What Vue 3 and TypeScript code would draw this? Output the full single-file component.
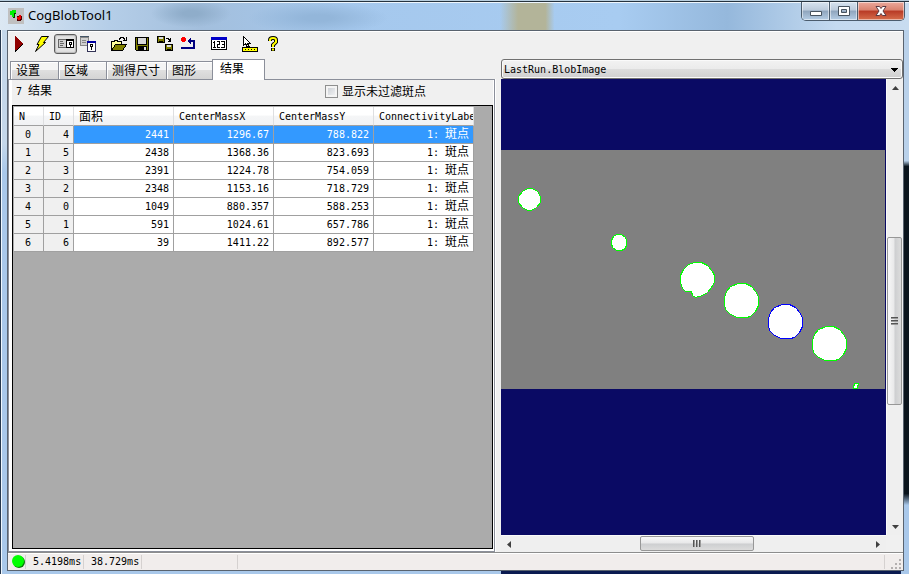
<script setup lang="ts">
import { ref } from 'vue'

interface BlobRow {
  n: number
  id: number
  area: number
  x: string
  y: string
}

const rows: BlobRow[] = [
  { n: 0, id: 4, area: 2441, x: '1296.67', y: '788.822' },
  { n: 1, id: 5, area: 2438, x: '1368.36', y: '823.693' },
  { n: 2, id: 3, area: 2391, x: '1224.78', y: '754.059' },
  { n: 3, id: 2, area: 2348, x: '1153.16', y: '718.729' },
  { n: 4, id: 0, area: 1049, x: '880.357', y: '588.253' },
  { n: 5, id: 1, area: 591, x: '1024.61', y: '657.786' },
  { n: 6, id: 6, area: 39, x: '1411.22', y: '892.577' },
]

const tabs = ['设置', '区域', '测得尺寸', '图形', '结果']
const activeTab = ref('结果')
const selected = ref(0)
const showUnfiltered = ref(false)
const image = ref('LastRun.BlobImage')

// Large blobs share one slightly irregular outline, centred on the origin.
const outline = 'M-3 -17H4L10 -14L15 -8L17 -3V5L14 11L9 16L5 17H-4L-11 14L-16 9L-17 3V-3L-15 -9L-11 -14Z'
const blobs = [
  { id: 2, x: 196, y: 201, d: 'M-3 -17H4L10 -14L15 -8L17 -4V3L14 8L10 13L5 16L-2 18L-5 16L-6 12L-12 12L-15 9L-17 3V-4L-14 -10L-9 -15Z' },
  { id: 3, x: 240, y: 222, d: outline },
  { id: 4, x: 284, y: 243, d: outline },
  { id: 5, x: 328, y: 265, d: outline },
]
</script>

<template>
  <div class="window">
    <header class="titlebar">
      <svg class="app-icon" viewBox="0 0 16 16" shape-rendering="crispEdges" aria-hidden="true">
        <path fill="#c0c0c0" d="M0 0h16v16H0z" />
        <path fill="#003c00" d="M5 5h3v1H7v4H5z" />
        <path fill="#00f000" d="M2 3h2V2h4v3H6v4H4V7H2z" />
        <path fill="#500000" d="M9 8h5v4h-1v1H9z" />
        <path fill="#f00000" d="M9 9h2V7h2v4h-1v1h-2v-1H9z" />
      </svg>
      <span class="title">CogBlobTool1</span>
      <div class="captions">
        <button type="button" class="cap" aria-label="最小化">
          <svg width="14" height="12" viewBox="0 0 14 12"><path fill="#fff" stroke="#47535f" d="M1.500 6.500h11v4h-11z" /></svg>
        </button>
        <button type="button" class="cap" aria-label="最大化">
          <svg width="14" height="12" viewBox="0 0 14 12"><path fill="#fff" fill-rule="evenodd" stroke="#47535f" d="M1.500 1.500h11v9h-11zM4.500 4.500h5v3h-5z" /></svg>
        </button>
        <button type="button" class="cap close" aria-label="关闭">
          <svg width="14" height="12" viewBox="0 0 14 12"><path fill="#fff" stroke="#5b3a42" d="M2 1.500h3.500L7 3.500l1.500-2H12L9 6l3 4.500H8.500L7 8.500l-1.500 2H2L5 6z" /></svg>
        </button>
      </div>
    </header>

    <div class="client">
      <div class="toolbar" role="toolbar">
        <button type="button" class="tool" aria-label="运行">
          <svg viewBox="0 0 16 16" shape-rendering="crispEdges"><path fill="#000" d="M4 0l9 8-9 8z" /><path fill="#900000" d="M4 0l8 7-7 7H4z" /></svg>
        </button>
        <button type="button" class="tool" aria-label="电气模式">
          <svg viewBox="0 0 16 16"><path fill="#ff0" stroke="#000" d="M7.500 .5h7L9.500 6.500h2L1.500 15.500l3.500-7H3z" /></svg>
        </button>
        <button type="button" class="tool pressed" aria-label="显示本地图像">
          <svg viewBox="0 0 16 16" shape-rendering="crispEdges">
            <path fill="#d0d0d0" stroke="#666" d="M.5 3.500h8v8h-8z" /><path stroke="#666" d="M2 5.500h3M2 7.500h4M2 9.500h3" />
            <path fill="#fff" stroke="#000" d="M8.500 3.500h7v8h-7z" /><path fill="#000" d="M8 3h8v2H8zM11 6h3v3h-1v2h-1V9h-1z" /><path fill="#fff" d="M12 7h1v1h-1z" />
          </svg>
        </button>
        <button type="button" class="tool" aria-label="浮动图像">
          <svg viewBox="0 0 16 16" shape-rendering="crispEdges">
            <path fill="#d0d0d0" stroke="#888" d="M.5 1.500h8v8h-8z" /><path stroke="#456" d="M0 .5h9" /><path stroke="#888" d="M2 4.500h4M2 6.500h4" />
            <path fill="#fff" stroke="#335" d="M7.500 6.500h8v9h-8z" /><path stroke="#0000a0" stroke-width="2" d="M7 6h9" /><path fill="#000" d="M10 8h3v3h-1v3h-1v-3h-1z" /><path fill="#fff" d="M11 9h1v1h-1z" />
          </svg>
        </button>
        <span class="gap"></span>
        <button type="button" class="tool" aria-label="打开">
          <svg viewBox="0 0 16 16" shape-rendering="crispEdges">
            <path fill="#ff9" stroke="#000" d="M.5 13.500v-8h3v-1h3v1h4v3" /><path fill="#808000" stroke="#000" d="M.5 14.500l4-6h11l-4 6z" />
            <path fill="none" stroke="#000" d="M8 3.500V2.500h1v-1h3v1h1v1h1M15.500 1v4M12 4.500h4" />
          </svg>
        </button>
        <button type="button" class="tool" aria-label="保存">
          <svg viewBox="0 0 16 16" shape-rendering="crispEdges">
            <path fill="#808000" stroke="#000" d="M1.500 1.500h13v13h-12l-1-1z" /><path fill="#d8d8d8" stroke="#000" d="M3.500 1.500h9v7h-9z" /><path fill="#000" d="M4 10h9v5H4z" /><path fill="#ddd" d="M10 11h2v3h-2z" />
          </svg>
        </button>
        <button type="button" class="tool" aria-label="另存为">
          <svg viewBox="0 0 16 16" shape-rendering="crispEdges">
            <path fill="#808000" stroke="#000" d="M.5 .5h7v6h-7z" /><path fill="#ddd" d="M2 1h4v2H2z" /><path fill="#000" d="M2 5h4v2H2z" />
            <path fill="#808000" stroke="#000" d="M8.500 8.500h7v6h-7z" /><path fill="#ddd" d="M10 9h4v2h-4z" /><path fill="#000" d="M10 13h4v2h-4z" />
            <path fill="none" stroke="#000" d="M9 2.500h2v1h1v1h2M13.500 2v3M11 5.500h3" />
          </svg>
        </button>
        <button type="button" class="tool" aria-label="重置">
          <svg viewBox="0 0 16 16" shape-rendering="crispEdges">
            <path fill="#f00" d="M2 1h3v1h1v3H5v1H2V5H1V2h1z" /><path fill="none" stroke="#000080" stroke-width="2" d="M9 5h5v7H1" /><path fill="#000080" d="M7 5l4-4v8z" />
          </svg>
        </button>
        <span class="gap"></span>
        <button type="button" class="tool" aria-label="显示数值">
          <svg viewBox="0 0 16 16" shape-rendering="crispEdges">
            <path fill="#fff" stroke="#000" d="M.5 1.500h15v12H.5z" /><path fill="#0000c8" d="M0 1h16v3H0z" />
            <path fill="none" stroke="#000" d="M2 6.500h1M3.500 5v7M2 11.500h3M6 5.500h2.500v3h-2v3H9M10 5.500h3.500v6H10M11 8.500h2" />
          </svg>
        </button>
        <span class="gap"></span>
        <button type="button" class="tool" aria-label="测量提示">
          <svg viewBox="0 0 16 16" shape-rendering="crispEdges">
            <path fill="#fff" stroke="#000" d="M1.500 .5v9l2-2 2 4h2l-2-4h3z" /><path fill="#ff0" stroke="#000" d="M.5 11.500h15v4H.5z" /><path stroke="#000" d="M3.500 13v1M6.500 13v1M9.500 13v1M12.500 13v1" />
          </svg>
        </button>
        <button type="button" class="tool" aria-label="帮助">
          <svg viewBox="0 0 16 16"><path fill="none" stroke="#000" stroke-width="4" d="M5 5V4q0-2 3-2t3 2v2L8 9v2M8 12v3" /><path fill="none" stroke="#ff0" stroke-width="2" d="M5 5V4q0-2 3-2t3 2v2L8 9v2M8 12.500v2" /></svg>
        </button>
      </div>

      <main class="panes">
        <section class="results">
          <div class="tabs" role="tablist">
            <button
              v-for="tab in tabs"
              :key="tab"
              type="button"
              role="tab"
              class="tab"
              :class="{ active: tab === activeTab }"
              :aria-selected="tab === activeTab"
              @click="activeTab = tab"
            >{{ tab }}</button>
          </div>
          <div class="page" role="tabpanel">
            <div class="summary">
              <span><span class="num">7 </span>结果</span>
              <label class="check"><input v-model="showUnfiltered" type="checkbox" />显示未过滤斑点</label>
            </div>
            <div class="grid">
              <table>
                <colgroup><col class="narrow" /><col class="narrow" /><col /><col /><col /><col /></colgroup>
                <thead>
                  <tr><th>N</th><th>ID</th><th class="cjk">面积</th><th>CenterMassX</th><th>CenterMassY</th><th>ConnectivityLabel</th></tr>
                </thead>
                <tbody>
                  <tr v-for="row in rows" :key="row.n" :class="{ selected: row.n === selected }" @click="selected = row.n">
                    <td class="head index">{{ row.n }}</td>
                    <td class="head">{{ row.id }}</td>
                    <td>{{ row.area }}</td>
                    <td>{{ row.x }}</td>
                    <td>{{ row.y }}</td>
                    <td>1: <span class="cjk">斑点</span></td>
                  </tr>
                </tbody>
              </table>
            </div>
          </div>
        </section>

        <section class="viewer">
          <div class="picker">
            <select v-model="image" aria-label="图像">
              <option>LastRun.BlobImage</option>
            </select>
            <svg class="arrow" width="7" height="4" viewBox="0 0 7 4" shape-rendering="crispEdges"><path d="M0 0h7L3.500 4z" /></svg>
          </div>
          <div class="display">
            <svg class="image" viewBox="0 0 385 456" preserveAspectRatio="xMinYMin slice" shape-rendering="crispEdges" role="img" aria-label="LastRun.BlobImage">
              <path fill="#0a0a64" d="M0 0h385v456H0z" />
              <path fill="#808080" d="M0 71h384v239H0z" />
              <g fill="#fff" stroke="#0f0">
                <path d="M26.500 109.500h5l5 3 3 5v6l-4 5-5 3h-4l-5-3-4-5v-6l4-5z" />
                <path d="M115.500 155.500h5l4 3 1 3v5l-2 4-4 1h-4l-4-3-1-4v-3l2-4z" />
                <g v-for="b in blobs" :key="b.id" :transform="`translate(${b.x} ${b.y})`">
                  <path :d="b.d" :class="{ current: b.id === rows[selected].id }" transform="translate(.5 -.5)" />
                </g>
                <path d="M353.500 304.500h4v2h-1v3h-4v-3h1z" />
              </g>
            </svg>
            <div class="scroll vertical" role="scrollbar" aria-orientation="vertical" aria-valuenow="50">
              <button type="button" aria-label="向上"><svg width="7" height="4" viewBox="0 0 7 4"><path d="M0 4h7L3.500 0z" /></svg></button>
              <div class="track before"></div>
              <div class="thumb"><i></i><i></i><i></i></div>
              <div class="track after"></div>
              <button type="button" aria-label="向下"><svg width="7" height="4" viewBox="0 0 7 4"><path d="M0 0h7L3.500 4z" /></svg></button>
            </div>
            <div class="scroll horizontal" role="scrollbar" aria-orientation="horizontal" aria-valuenow="50">
              <button type="button" aria-label="向左"><svg width="4" height="7" viewBox="0 0 4 7"><path d="M4 0v7L0 3.500z" /></svg></button>
              <div class="track before"></div>
              <div class="thumb"><i></i><i></i><i></i></div>
              <div class="track after"></div>
              <button type="button" aria-label="向右"><svg width="4" height="7" viewBox="0 0 4 7"><path d="M0 0v7l4-3.500z" /></svg></button>
            </div>
          </div>
        </section>
      </main>

      <footer class="status">
        <span class="led"><svg width="13" height="13" viewBox="0 0 13 13"><circle cx="7" cy="7" r="6" fill="#087808" /><circle cx="6" cy="6" r="6" fill="#0f0" /></svg></span>
        <span class="time">5.4198ms</span>
        <span class="time">38.729ms</span>
        <span class="message"></span>
        <span class="filler"></span>
        <svg class="grip" width="12" height="12" viewBox="0 0 12 12" shape-rendering="crispEdges"><path fill="#b4b0b0" d="M9 1h2v2H9zM5 5h2v2H5zM9 5h2v2H9zM1 9h2v2H1zM5 9h2v2H5zM9 9h2v2H9z" /></svg>
      </footer>
    </div>
  </div>
</template>

<style>
body {
  margin: 0;
}
</style>

<style scoped>
* {
  box-sizing: border-box;
}

.window {
  display: flex;
  flex-direction: column;
  height: 100vh;
  padding: 0 5px 3px 7px;
  background:
    linear-gradient(#0a1a50, #0a1a50) right 8px bottom 0 / 44% 3px no-repeat,
    linear-gradient(#b9d1ea 0 28%, #0a141c 29% 86%, #a9c8ea 88%) right / 5px 100% no-repeat,
    linear-gradient(90deg, #26374d 0 1px, #f0f7fd 1px 2px, transparent 2px) left / 2px 100% no-repeat,
    linear-gradient(#c4d7ea 0 25%, #a9c8ea 30%);
  color: #000;
  font-family: "DejaVu Sans Mono", "Noto Sans CJK SC", monospace;
  font-size: 10px;
  line-height: 16px;
}

button {
  padding: 0;
  border: 0;
  background: none;
  color: inherit;
  font: inherit;
}

.titlebar {
  display: flex;
  flex: none;
  align-items: center;
  gap: 4px;
  height: 30px;
  margin: 0 -5px 0 -7px;
  padding: 2px 4px 0 8px;
  background:
    linear-gradient(#b8cede 0 1px, #26333f 1px 2px, #eef6fd 2px 3px, transparent 3px),
    radial-gradient(ellipse 70px 16px at 35% 60%, #93b6da 20%, transparent),
    radial-gradient(ellipse 40px 14px at 21% 45%, #8fadca 20%, transparent),
    linear-gradient(90deg, transparent 55%, #b3b499 57% 60%, transparent 61%),
    linear-gradient(90deg, #dce8f3, #b5cee8 12%, #a3bfdd 22%, #a5c8ed 38%, #a8ccf1 68%, #95b8dc 80%, #c4daf0 92%, #c8dcf0);
}

.app-icon {
  width: 16px;
  height: 16px;
}

.title {
  flex: 1;
  padding-bottom: 2px;
  font: 13px/16px "Noto Sans", sans-serif;
}

.captions {
  display: flex;
  align-self: flex-start;
  overflow: hidden;
  height: 19px;
  border: 1px solid #4b5c6d;
  border-top: 0;
  border-radius: 0 0 5px 5px;
}

.cap {
  display: flex;
  align-items: center;
  justify-content: center;
  width: 28px;
  border-right: 1px solid #4b5c6d;
  background: linear-gradient(#d7e3ef, #bccbdc 45%, #8fa5bd 50%, #b5cde5);
  box-shadow: inset 0 0 0 1px #ffffff80;
}

.cap.close {
  width: 46px;
  border: 0;
  background: linear-gradient(#eba99c, #d9826f 45%, #b83a25 50%, #d66e4c);
}

.client {
  display: flex;
  flex: 1;
  flex-direction: column;
  min-height: 0;
  border: 1px solid #59636f;
  background: #f0f0f0;
  box-shadow: inset 0 1px #fff;
}

.toolbar {
  display: flex;
  flex: none;
  align-items: center;
  height: 28px;
  padding-bottom: 2px;
}

.tool {
  display: flex;
  align-items: center;
  width: 23px;
  height: 20px;
  padding-left: 3px;
  border-radius: 3px;
}

.tool svg {
  width: 16px;
  height: 16px;
}

.tool.pressed {
  border: 1px solid #5c5c5c;
  background: #e2e2e2;
  box-shadow: inset 0 0 1px 1px #b8b8b8;
}

.gap {
  width: 8px;
}

.panes {
  display: grid;
  flex: 1;
  grid-template-columns: minmax(0, 487fr) minmax(0, 402fr);
  gap: 6px;
  min-height: 0;
}

.results {
  display: flex;
  flex-direction: column;
  min-height: 0;
}

.tabs {
  display: flex;
  flex: none;
  align-items: flex-end;
  height: 21px;
  padding-left: 2px;
}

.tab {
  height: 18px;
  margin-bottom: 1px;
  padding: 0 18px 0 5px;
  border: 1px solid #8b8f9a;
  border-right: 0;
  border-bottom: 0;
  background: linear-gradient(#f4f4f4 45%, #dfdfdf 50%, #d4d4d4);
  box-shadow: inset 1px 1px #fff;
  font-size: 12px;
  line-height: 18px;
}

.tab:nth-child(3) {
  padding-right: 6px;
}

.tab:nth-child(4) {
  padding-right: 16px;
}

.tab.active {
  z-index: 1;
  height: 21px;
  margin-bottom: 0;
  padding: 0 20px 2px 7px;
  border-right: 1px solid #8b8f9a;
  background: #fff;
}

.page {
  display: flex;
  flex: 1;
  flex-direction: column;
  min-height: 0;
  margin-top: -1px;
  padding: 0 1px 2px 3px;
  border: 1px solid #8b8f9a;
  background: #f0f0f0;
  box-shadow: inset 3px 0 #fff, inset -1px -2px #fff, 1px 0 #fff;
}

.summary {
  display: flex;
  flex: none;
  align-items: center;
  justify-content: space-between;
  height: 25px;
  padding: 0 67px 2px 4px;
  font-size: 12px;
}

.num {
  font-size: 10px;
}

.check {
  display: flex;
  align-items: center;
  gap: 4px;
}

.check input {
  width: 13px;
  height: 13px;
  margin: 0;
  border: 1px solid #8e8f8f;
  background: linear-gradient(135deg, #c4c9d0, #f8f8f8);
  box-shadow: inset 0 0 0 2px #f4f4f4;
  appearance: none;
}

.check input:checked {
  background: #34577f;
}

.grid {
  flex: 1;
  overflow: hidden;
  padding: 1px 0 0 1px;
  border: 1px solid #000;
  background: #ababab;
}

table {
  width: 460px;
  border-collapse: separate;
  border-spacing: 0;
  table-layout: fixed;
}

col {
  width: 100px;
}

.narrow {
  width: 30px;
}

th {
  overflow: hidden;
  height: 19px;
  padding: 2px 0 0 5px;
  border-right: 1px solid #dedfe1;
  border-bottom: 1px solid #a0a0a0;
  background: linear-gradient(#fff 45%, #f5f6f7 50%, #f1f2f4);
  font-weight: 400;
  line-height: 16px;
  text-align: left;
  white-space: nowrap;
}

td {
  height: 18px;
  padding: 1px 4px 0 0;
  border-right: 1px solid #a0a0a0;
  border-bottom: 1px solid #a0a0a0;
  background: #fff;
  line-height: 16px;
  text-align: right;
}

.cjk {
  font-size: 12px;
}

td .cjk {
  line-height: 14px;
}

.selected td {
  background: #39f;
  color: #fff;
}

td.head,
.selected td.head {
  background: #f0f0f0;
  color: #000;
}

td.index {
  padding: 1px 1px 0 0;
  text-align: center;
}

.viewer {
  display: flex;
  flex-direction: column;
  min-height: 0;
}

.picker {
  position: relative;
  flex: none;
  height: 20px;
}

.picker select {
  width: 100%;
  height: 20px;
  padding: 1px 20px 0 2px;
  border: 1px solid #707070;
  border-radius: 3px;
  background: linear-gradient(#f2f2f2, #ebebeb 48%, #dddddd 50%, #cfcfcf);
  box-shadow: inset 0 0 0 1px #fafafa;
  color: #000;
  font: inherit;
  appearance: none;
}

.arrow {
  position: absolute;
  top: 9px;
  right: 5px;
  pointer-events: none;
}

.display {
  display: grid;
  flex: 1;
  grid-template-rows: minmax(0, 1fr) 17px;
  grid-template-columns: minmax(0, 1fr) 17px;
  min-height: 0;
}

.image {
  width: 100%;
  height: 100%;
  background: #0a0a64;
}

.image .current {
  stroke: #00f;
}

.scroll {
  display: flex;
  border: solid #fafafa;
  border-width: 0 0 0 1px;
  background: #efefef;
}

.scroll.vertical {
  flex-direction: column;
}

.scroll.horizontal {
  border-width: 1px 0 0;
}

.scroll button {
  display: flex;
  flex: none;
  align-items: center;
  justify-content: center;
  width: 16px;
  height: 17px;
}

.scroll.horizontal button {
  height: 16px;
}

.scroll path {
  fill: #404040;
}

.before {
  flex: 142;
}

.after {
  flex: 114;
}

.horizontal .before {
  flex: 124;
}

.horizontal .after {
  flex: 117;
}

.thumb {
  display: flex;
  flex: 166;
  flex-direction: column;
  align-items: center;
  justify-content: center;
  gap: 1px;
  width: 15px;
  border: 1px solid #979797;
  border-radius: 2px;
  background: linear-gradient(90deg, #f7f7f7, #e8e8e9 48%, #cdced0 52%, #dcdcdc);
}

.horizontal .thumb {
  flex: 112;
  flex-direction: row;
  height: 15px;
  background: linear-gradient(#f7f7f7, #e8e8e9 48%, #cdced0 52%, #dcdcdc);
}

.thumb i {
  width: 7px;
  height: 2px;
  border-top: 1px solid #555;
  background: #999;
}

.horizontal .thumb i {
  width: 2px;
  height: 7px;
  border-top: 0;
  border-left: 1px solid #555;
}

.status {
  display: flex;
  flex: none;
  align-items: center;
  height: 18px;
  border-top: 1px solid #8d8d8d;
  background: #f1edec;
  box-shadow: inset 0 1px #fff;
}

.status span {
  height: 14px;
  border-right: 1px solid #d5d1d0;
  line-height: 14px;
}

.status .led {
  width: 18px;
  padding-left: 4px;
}

.status .time {
  width: 58px;
  padding-left: 7px;
}

.status .message {
  width: 96px;
}

.status .filler {
  flex: 1;
}

.grip {
  margin: 4px 1px 0 5px;
}
</style>
